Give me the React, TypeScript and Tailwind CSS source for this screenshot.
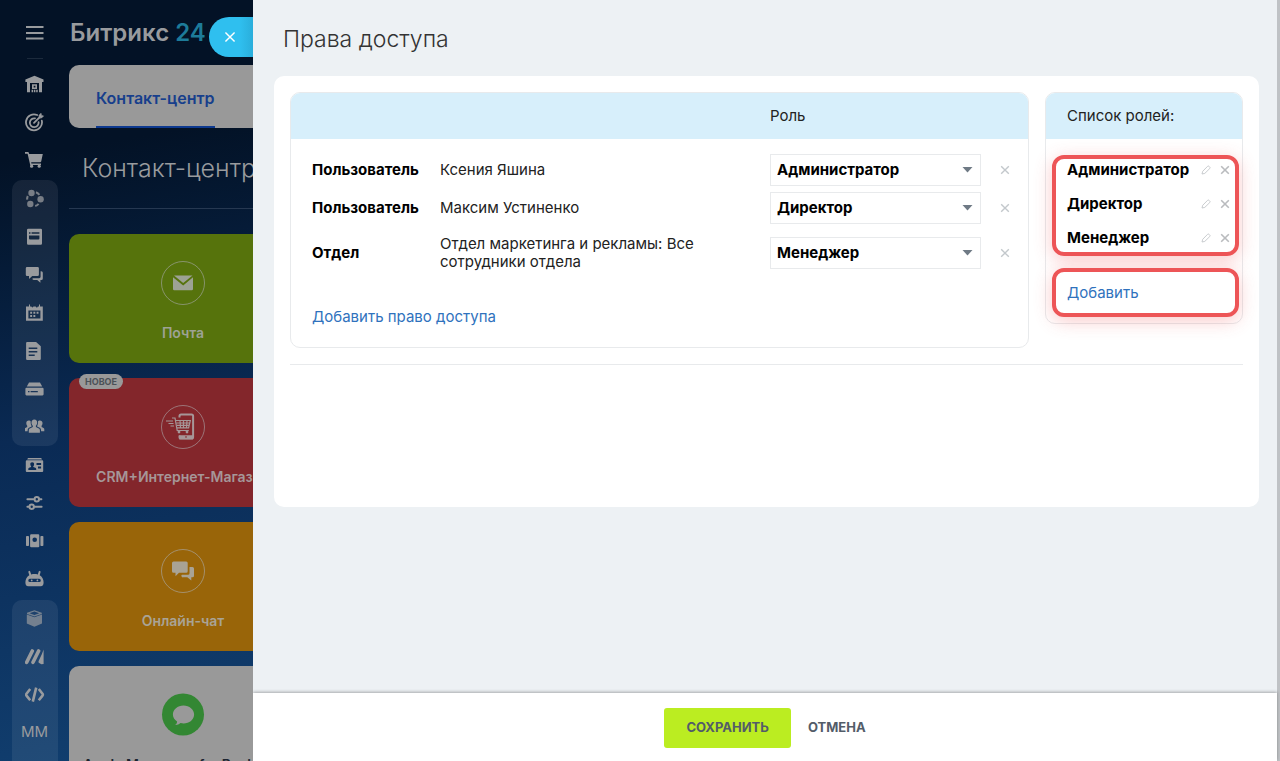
import React, { useState } from 'react';
import type { ReactNode } from 'react';

interface NavItem {
  label: string;
  icon: ReactNode;
}

interface AccessRow {
  id: number;
  kind: string;
  name: string;
  role: string;
}

const ROLES = ['Администратор', 'Директор', 'Менеджер'];

const ACCESS_ROWS: AccessRow[] = [
  { id: 1, kind: 'Пользователь', name: 'Ксения Яшина', role: 'Администратор' },
  { id: 2, kind: 'Пользователь', name: 'Максим Устиненко', role: 'Директор' },
  { id: 3, kind: 'Отдел', name: 'Отдел маркетинга и рекламы: Все сотрудники отдела', role: 'Менеджер' },
];

function NavIcon({ children }: { children: ReactNode }) {
  return (
    <svg width="20" height="20" viewBox="0 0 20 20" fill="currentColor" aria-hidden="true">
      {children}
    </svg>
  );
}

const TOP_NAV: NavItem[] = [
  {
    label: 'Компания',
    icon: (
      <path
        fillRule="evenodd"
        d="M9.500 1.800 18.500 5.400V8H17v10.300H2V8H.4V5.400ZM5 9v9.300h1.600v-2.600h1.500v2.600h.8v-2.600h1.500v2.600h.8v-2.600h1.500v2.600H14V9Zm2 1.300h5V15H7Zm1.700 1.500v1.800h1.700v-1.800Z"
      />
    ),
  },
  {
    label: 'Цели',
    icon: (
      <g fill="none" stroke="currentColor" strokeWidth="1.8" strokeLinecap="round">
        <path d="M12.200 3A8 8 0 1 0 16.800 8.600" />
        <path d="M10 6.400a4.400 4.400 0 1 0 3.600 3.800" />
        <path d="m9 10.800 6-6" />
        <path d="M14 5.600V3.200l2-2 .5 2.200 2.100.5-2 2Z" fill="currentColor" strokeWidth="0.6" />
      </g>
    ),
  },
  {
    label: 'Магазин',
    icon: (
      <>
        <path d="M0 2h3.400l.8 2h13.600l-1.600 7.600-.8.6H6.200l.2 1.200H16V15H5.200L2.600 3.800H0Z" />
        <circle cx="6.600" cy="16.200" r="1.600" />
        <circle cx="14.200" cy="16.200" r="1.600" />
      </>
    ),
  },
];

const GROUP_NAV: NavItem[] = [
  {
    label: 'Совместная работа',
    icon: (
      <g opacity="0.75">
        <circle cx="6.500" cy="4" r="3.200" />
        <circle cx="15.600" cy="10.300" r="3.200" />
        <circle cx="5.300" cy="15" r="3.200" />
        <path
          d="M11 3.200a7.500 7.500 0 0 1 3.400 2.600M13.600 14.800a7 7 0 0 1-3.400 2.200M2.800 7a7 7 0 0 0-.6 3.600"
          fill="none"
          stroke="currentColor"
          strokeWidth="2"
        />
      </g>
    ),
  },
  {
    label: 'Лента',
    icon: (
      <path
        fillRule="evenodd"
        d="M3.200 1.800h12.600a1.200 1.200 0 0 1 1.200 1.200v13.600a1.200 1.200 0 0 1-1.200 1.200H3.200A1.200 1.200 0 0 1 2 16.600V3a1.200 1.200 0 0 1 1.200-1.200ZM4 5.200v1.500h1.500V5.200Zm2.600 0v1.500h7.800V5.200ZM4 8.400v3a1 1 0 0 0 1 1h8.400a1 1 0 0 0 1-1v-3Z"
      />
    ),
  },
  {
    label: 'Чаты',
    icon: (
      <>
        <path d="M2 2h10.600a1.300 1.300 0 0 1 1.300 1.300v6.500a1.300 1.300 0 0 1-1.300 1.300H7.200L4 14v-2.900H2A1.300 1.300 0 0 1 .8 9.800V3.300A1.300 1.300 0 0 1 2 2Z" />
        <path d="M15.600 6.200h.7A1.500 1.500 0 0 1 17.800 7.700v5.800a1.500 1.500 0 0 1-1.500 1.500h-.9v2.800L12.200 15H8.800a1.300 1.300 0 0 1-1.200-1.800h6.600a1.400 1.400 0 0 0 1.400-1.400Z" />
      </>
    ),
  },
  {
    label: 'Календарь',
    icon: (
      <path
        fillRule="evenodd"
        d="M1 3.600h3V1.500h1v2.100h1.400a1 1 0 0 0 1 .8 1 1 0 0 0 1-.8h2.400a1 1 0 0 0 2 0H14V1.500h1v2.100h2.800v14.200H1ZM3.400 7.600v7.800h12V7.600Zm1.800 1.200h1.900v1.900H5.200Zm3.200 0h1.900v1.900H8.400Zm3.200 0h1.900v1.900h-1.900Zm-6.400 3.200h1.900v1.900H5.200Zm3.200 0h1.900v1.900H8.400Z"
      />
    ),
  },
  {
    label: 'Документы',
    icon: (
      <path
        fillRule="evenodd"
        d="M2.200 1h8.900l4.700 4.300v12.600a1.100 1.100 0 0 1-1.100 1.100H2.200a1.100 1.100 0 0 1-1.100-1.100V2.100A1.100 1.100 0 0 1 2.200 1Zm1.500 5.400v1.700h8.600V6.400Zm0 3.500v1.700h8.600V9.900Zm0 3.500v1.700h6v-1.700Z"
      />
    ),
  },
  {
    label: 'Диск',
    icon: (
      <>
        <path d="M4 3.500h11l2.200 4.100H1.800Z" />
        <path
          fillRule="evenodd"
          d="M1.500 8.800h16a1.100 1.100 0 0 1 1.100 1.100v5.400a1.100 1.100 0 0 1-1.100 1.100h-16A1.100 1.100 0 0 1 .4 15.300V9.900a1.100 1.100 0 0 1 1.100-1.100ZM3 11.900v1.400h1.500v-1.400Zm2.600 0v1.400h7.200v-1.400Z"
        />
      </>
    ),
  },
  {
    label: 'Группы',
    icon: (
      <>
        <path d="M9.300 2.400c2 0 3 1.500 2.900 3.300-.1 1.400-.7 2.500-1.300 3v1.400l3 1.400c.7.300 1 1 1 1.800v2.500H3.800v-2.500c0-.8.300-1.500 1-1.800l3-1.400V8.700c-.6-.5-1.300-1.600-1.300-3 0-1.800.9-3.300 2.800-3.300Z" />
        <path d="M3.800 3.600c.9 0 1.600.4 1.900 1-.2 1.700.2 3.200.9 4.300v.7l-2.600 1.200c-1 .6-1.300 1.300-1.400 3.500H-.5v-2c0-.6.300-1 .8-1.300l1.900-1.100V8.700C1.500 8 1.300 7 1.300 6c0-1.400.9-2.400 2.500-2.400Z" />
        <path d="M14.900 3.600c-.9 0-1.600.4-1.900 1 .2 1.700-.2 3.200-.9 4.300v.7l2.600 1.200c1 .6 1.300 1.300 1.400 3.500h3.200v-2c0-.6-.3-1-.8-1.300l-1.900-1.100V8.700c.7-.7.9-1.700.9-2.700 0-1.400-1-2.400-2.600-2.400Z" />
      </>
    ),
  },
];

const MIDDLE_NAV: NavItem[] = [
  {
    label: 'CRM',
    icon: (
      <>
        <path d="M3 3h13.200l.8 1.600H2.200Z" />
        <path
          fillRule="evenodd"
          d="M1.800 5.300h15.400a1 1 0 0 1 1 1v9.600a1 1 0 0 1-1 1H1.800a1 1 0 0 1-1-1V6.300a1 1 0 0 1 1-1Zm5.400 1.900c-1.300 0-2 .9-1.900 2.100 0 .9.400 1.500.8 1.900v.7l-2 .9c-.6.300-.8.700-.8 1.300v1h7.900v-1c0-.6-.3-1-.8-1.300l-2.100-.9v-.7c.5-.4.8-1 .8-1.900.1-1.200-.6-2.100-1.900-2.100Zm4.300.9v2h4.600v-2Zm1.500 3.400v2h3.100v-2Z"
        />
      </>
    ),
  },
  {
    label: 'Настройки',
    icon: (
      <g fill="none" stroke="currentColor" strokeWidth="2" strokeLinecap="round">
        <path d="M2.400 6.200h6M14.600 6.200h1.800M2.400 13.800h1.200M9.800 13.800h6.800" />
        <circle cx="11.800" cy="6.200" r="2.200" />
        <circle cx="6.700" cy="13.800" r="2.200" />
      </g>
    ),
  },
  {
    label: 'Автоматизация',
    icon: (
      <>
        <path
          fillRule="evenodd"
          d="M6.200 3.300h7a1.100 1.100 0 0 1 1.100 1.100v10.800a1.100 1.100 0 0 1-1.100 1.100h-7a1.100 1.100 0 0 1-1.100-1.100V4.400a1.100 1.100 0 0 1 1.100-1.100Zm3.500 3.100a2.300 2.300 0 1 0 0 4.600 2.300 2.300 0 0 0 0-4.600Z"
        />
        <rect x="1" y="5" width="3" height="10" rx="0.8" />
        <rect x="15.400" y="5" width="3" height="10" rx="0.8" />
      </>
    ),
  },
  {
    label: 'Роботы',
    icon: (
      <path
        fillRule="evenodd"
        d="M3.200 2.400 4.900 1.800l1.300 3.600c2.100-.6 4.500-.6 6.600 0L14 1.800l1.700.6-1 3.800c2.500 1.500 3.900 4.100 3.900 7.100 0 2.500-.9 4-2.900 4H3.300c-2 0-2.900-1.500-2.900-4 0-3 1.400-5.600 3.900-7.100Zm1.700 7.400a1.600 1.600 0 0 0 0 3.200h9.300a1.600 1.600 0 0 0 0-3.200Zm1.800.7a.9.900 0 1 1 0 1.800.9.900 0 0 1 0-1.800Zm5.700 0a.9.900 0 1 1 0 1.800.9.900 0 0 1 0-1.800Z"
      />
    ),
  },
];

const BOTTOM_NAV: NavItem[] = [
  {
    label: 'Маркет',
    icon: (
      <g opacity="0.7">
        <path d="M9.400 1.200 16.800 3.800V5L9.400 7.600 2 5V3.800ZM9.400 2.500 4.600 4.200l4.800 1.700 4.800-1.700Z" fillRule="evenodd" />
        <path d="M1.800 5.400 9.400 8.300 17 5.400v9.100l-7.600 3.300-7.600-3.300Z" />
      </g>
    ),
  },
  {
    label: 'Подписка',
    icon: (
      <g fill="none" stroke="currentColor" strokeWidth="3.600" strokeLinecap="round">
        <path d="M1.700 15.300 7.300 4M8 15.300 13.600 4" />
        <path d="m18.600 2.600V17l-2.200.3-2.700-1.500-.2-1.600 3.200-6.600Z" fill="currentColor" stroke="none" />
      </g>
    ),
  },
  {
    label: 'Разработчикам',
    icon: (
      <g fill="none" stroke="currentColor" strokeWidth="2.600">
        <path d="M5.200 4 1.500 8.700a1.600 1.600 0 0 0 0 1.900l3.700 4.700M13.800 4l3.700 4.700a1.600 1.600 0 0 1 0 1.900l-3.700 4.700M11.200 2.600 7.800 16.600" />
      </g>
    ),
  },
];

function NavButton({ item }: { item: NavItem }) {
  return (
    <button
      type="button"
      aria-label={item.label}
      className="flex h-[38px] w-[46px] items-center justify-center"
    >
      <NavIcon>{item.icon}</NavIcon>
    </button>
  );
}

function Sidebar() {
  return (
    <nav className="flex w-[69px] shrink-0 flex-col items-center overflow-hidden pt-3.5 text-[#999b9e]">
      <button type="button" aria-label="Меню" className="flex h-[38px] w-[46px] shrink-0 items-center justify-center">
        <svg width="20" height="20" viewBox="0 0 20 20" fill="none" stroke="currentColor" strokeWidth="1.8">
          <path d="M1 4h17.500M1 10h17.500M1 15.500h17.500" />
        </svg>
      </button>
      <div className="mt-1.5 mb-1.5 h-px w-4 shrink-0 bg-white/10" />
      <div className="flex flex-col">
        {TOP_NAV.map((item) => (
          <NavButton key={item.label} item={item} />
        ))}
      </div>
      <div className="mt-px flex flex-col rounded-[10px] bg-white/7">
        {GROUP_NAV.map((item) => (
          <NavButton key={item.label} item={item} />
        ))}
      </div>
      <div className="flex flex-col">
        {MIDDLE_NAV.map((item) => (
          <NavButton key={item.label} item={item} />
        ))}
      </div>
      <div className="mt-0.5 flex flex-1 flex-col rounded-t-[10px] bg-white/7">
        {BOTTOM_NAV.map((item) => (
          <NavButton key={item.label} item={item} />
        ))}
        <button type="button" className="h-9 w-[46px] text-[15px]">
          ММ
        </button>
      </div>
    </nav>
  );
}

function ChannelCard({ title, className, icon, badge }: { title: string; className: string; icon: ReactNode; badge?: string }) {
  return (
    <a href="#" className={`relative flex h-[129px] shrink-0 flex-col items-center rounded-[10px] pt-[27px] ${className}`}>
      {badge && (
        <span className="absolute -top-1 left-2.5 rounded-full bg-[#999] px-1.5 text-[9px] leading-[15px] font-bold text-[#4b5157]">
          {badge}
        </span>
      )}
      {icon}
      <span className="mt-[18px] text-sm font-semibold whitespace-nowrap">{title}</span>
    </a>
  );
}

function CircleIcon({ children }: { children: ReactNode }) {
  return (
    <svg className="shrink-0" width="44" height="44" viewBox="0 0 44 44" fill="currentColor" aria-hidden="true">
      <circle cx="22" cy="22" r="21.500" fill="none" stroke="currentColor" opacity="0.7" />
      {children}
    </svg>
  );
}

function ContactCenter() {
  return (
    <main className="flex w-[228px] shrink-0 flex-col">
      <div className="mt-[17px] h-8 pl-px text-2xl leading-8 font-semibold whitespace-nowrap text-[#999b9e]">
        Битрикс <span className="text-[#1d7b99]">24</span>
      </div>
      <div className="mt-4 flex h-[63px] shrink-0 rounded-[10px] bg-[#999] pl-[27px]">
        <a
          href="#"
          className="flex items-center border-b-2 border-[#0d398f] pt-1 text-base font-semibold text-[#173f8c]"
        >
          Контакт-центр
        </a>
      </div>
      <h2 className="mt-5 pl-[13px] text-[25px] leading-10 font-light whitespace-nowrap text-[#999b9e]">Контакт-центр</h2>
      <hr className="mt-5 border-[#263851]" />
      <div className="mt-[25px] flex flex-col gap-[15px]">
        <ChannelCard
          title="Почта"
          className="bg-[#56730c] text-[#9da294]"
          icon={
            <CircleIcon>
              <path d="M13 14.500h18.500L22.200 22Z" />
              <path d="M12 16.200 22.200 24.500 32 16.200V28a1.200 1.200 0 0 1-1.200 1.200H13.200A1.200 1.200 0 0 1 12 28Z" />
            </CircleIcon>
          }
        />
        <ChannelCard
          title="CRM+Интернет-Магазин"
          className="bg-[#83262b] text-[#a69698]"
          badge="НОВОЕ"
          icon={
            <CircleIcon>
              <path
                d="M18.500 12.500v-1.400c0-1 .7-1.600 1.600-1.600h10.400c1 0 1.600.6 1.600 1.600v20.800c0 1-.6 1.600-1.600 1.600H20.100c-1 0-1.600-.6-1.600-1.600v-1.400"
                fill="none"
                stroke="currentColor"
                strokeWidth="2"
              />
              <path fillRule="evenodd" d="M18 30.300h14v4H18Zm7 1a1 1 0 1 0 0 2 1 1 0 0 0 0-2Z" />
              <path
                d="M11 13h3l2.200 12.500h11.600M15 15.500h14.300l-1.700 7.300H16.200M15.600 18h13M16 20.400h12M19 15.500l.5 7.300M22.500 15.500v7.300M26 15.500l-.5 7.300M5 16h7M7.500 18.500h5M9.500 21h3.500"
                fill="none"
                stroke="currentColor"
                strokeWidth="1.200"
              />
              <circle cx="18" cy="27" r="1.400" />
              <circle cx="26" cy="27" r="1.400" />
            </CircleIcon>
          }
        />
        <ChannelCard
          title="Онлайн-чат"
          className="bg-[#996509] text-[#a9a395]"
          icon={
            <CircleIcon>
              <path d="M12.500 12.500h12.700a1.500 1.500 0 0 1 1.500 1.500v8.300a1.500 1.500 0 0 1-1.500 1.500H18l-3.500 3.400v-3.400h-2a1.500 1.500 0 0 1-1.500-1.500V14a1.500 1.500 0 0 1 1.500-1.500Z" />
              <path d="M28.500 18h3a1.500 1.500 0 0 1 1.500 1.500v7.300a1.500 1.500 0 0 1-1.500 1.500h-1.200v3.200l-4-3.200h-4a1.500 1.500 0 0 1-1.400-2.600h6.100a1.500 1.500 0 0 0 1.500-1.500Z" />
            </CircleIcon>
          }
        />
        <ChannelCard
          title="Apple Messages for Business"
          className="bg-[#999] text-[#1c2430]"
          icon={
            <svg className="shrink-0" width="44" height="44" viewBox="0 0 44 44" aria-hidden="true">
              <circle cx="22" cy="21.500" r="21" fill="#338733" />
              <path
                d="M22.500 12.500c5.900 0 10.600 4 10.600 9s-4.700 9-10.600 9c-1 0-2-.1-2.900-.4-1.600 1.400-3.500 2-5.400 1.900 1.200-1 1.900-2 1.900-3.600-2.600-1.600-4.200-4.100-4.200-6.900 0-5 4.700-9 10.600-9Z"
                fill="#999"
              />
            </svg>
          }
        />
      </div>
    </main>
  );
}

function CrossIcon({ className = '' }: { className?: string }) {
  return (
    <svg className={className} width="10" height="10" viewBox="0 0 10 10" fill="none" stroke="currentColor" aria-hidden="true">
      <path d="m1.200 1.200 7.600 7.600M8.800 1.200 1.200 8.800" />
    </svg>
  );
}

function PencilIcon() {
  return (
    <svg width="10" height="10" viewBox="0 0 10 10" fill="none" stroke="currentColor" strokeWidth="0.9" aria-hidden="true">
      <path d="M1 9 1.700 6.300 6.600 1.300a1 1 0 0 1 1.400 0l.8.800a1 1 0 0 1 0 1.400L3.800 8.400Z" />
    </svg>
  );
}

function AccessTable() {
  const [rows, setRows] = useState(ACCESS_ROWS);

  function handleRole(id: number, role: string) {
    setRows(rows.map((row) => (row.id === id ? { ...row, role } : row)));
  }

  return (
    <section className="flex-1 overflow-hidden rounded-[10px] border border-[#e8eaec]">
      <table className="w-full table-fixed text-left text-[15px] leading-[18px]">
        <colgroup>
          <col className="w-[149px]" />
          <col />
          <col className="w-[211px]" />
          <col className="w-[47px]" />
        </colgroup>
        <thead className="bg-[#d7effb]">
          <tr className="h-[46px]">
            <th />
            <th />
            <th className="font-normal text-[#222]">Роль</th>
            <th />
          </tr>
        </thead>
        <tbody className="before:block before:h-3">
          {rows.map((row) => (
            <tr key={row.id} className="h-[38px] last:h-[52px]">
              <th className="pl-[21px] font-bold">{row.kind}</th>
              <td className="pr-14 text-[#222]">{row.name}</td>
              <td>
                <div className="relative">
                  <select
                    aria-label={`Роль: ${row.name}`}
                    value={row.role}
                    onChange={(e) => handleRole(row.id, e.target.value)}
                    className="block h-8 w-full appearance-none border border-[#e8eaec] bg-white px-1.5 font-bold"
                  >
                    {ROLES.map((role) => (
                      <option key={role}>{role}</option>
                    ))}
                  </select>
                  <svg
                    className="pointer-events-none absolute top-[13px] right-2"
                    width="11"
                    height="6"
                    viewBox="0 0 11 6"
                    fill="#6f7a85"
                  >
                    <path d="M.5 0h10L5.500 5.500Z" />
                  </svg>
                </div>
              </td>
              <td>
                <button
                  type="button"
                  aria-label="Удалить"
                  onClick={() => setRows(rows.filter((r) => r.id !== row.id))}
                  className="flex w-full justify-center text-[#c3c8cc]"
                >
                  <CrossIcon className="stroke-[1.4]" />
                </button>
              </td>
            </tr>
          ))}
        </tbody>
      </table>
      <a href="#" className="mt-7 mb-5 ml-[21px] inline-block text-[15px] leading-5 text-[#2f72bd]">
        Добавить право доступа
      </a>
    </section>
  );
}

function RoleList() {
  return (
    <section className="w-[198px] shrink-0 self-start rounded-[10px] border border-[#e8eaec] text-[15px] leading-5">
      <h3 className="rounded-t-[9px] bg-[#d7effb] py-[13px] pl-[21px] text-[#222]">Список ролей:</h3>
      <div className="flex flex-col gap-3 pt-4 pr-[3px] pb-1.5 pl-1.5">
        <ul className="flex flex-col gap-3.5 rounded-xl border-4 border-[#ed5557] bg-white pt-px pr-[5px] pb-1 pl-[11px] shadow-[0_4px_18px_rgba(238,80,80,0.3)]">
          {ROLES.map((role) => (
            <li key={role} className="flex items-center font-bold">
              <span className="flex-1">{role}</span>
              <button type="button" aria-label={`Изменить: ${role}`} className="mr-[9px] text-[#c3c6c9]">
                <PencilIcon />
              </button>
              <button type="button" aria-label={`Удалить: ${role}`} className="text-[#b9bbbe]">
                <CrossIcon className="stroke-[1.6]" />
              </button>
            </li>
          ))}
        </ul>
        <div className="rounded-xl border-4 border-[#ed5557] bg-white pt-[11px] pb-2.5 pl-[11px] shadow-[0_4px_18px_rgba(238,80,80,0.3)]">
          <a href="#" className="text-[#2f72bd]">
            Добавить
          </a>
        </div>
      </div>
    </section>
  );
}

export default function App() {
  return (
    <div className="flex h-screen overflow-hidden bg-[#edf1f4] font-[Inter,sans-serif] text-black">
      <div className="relative flex w-[253px] shrink-0 overflow-hidden bg-linear-170 from-[#031226] from-20% via-[#0a2a54] via-55% to-[#113f70]">
        <Sidebar />
        <ContactCenter />
        <button
          type="button"
          aria-label="Закрыть"
          className="absolute top-[17px] right-0 flex h-10 w-11 items-center rounded-l-full bg-linear-to-r from-[#2fbfef] from-70% to-[#2aaedb] pl-[15px] text-white"
        >
          <CrossIcon className="size-3 stroke-[1.2]" />
        </button>
      </div>
      <div className="flex min-w-0 flex-1 flex-col border-r-3 border-[#bfc2c5]">
        <h1 className="mt-5 ml-[30px] text-[23px] leading-[38px] font-light text-[#333]">Права доступа</h1>
        <div className="mt-[18px] mr-[18px] ml-[21px] min-h-[431px] rounded-[10px] bg-white p-4">
          <div className="flex items-start gap-4 border-b border-[#e8eaec] pb-4">
            <AccessTable />
            <RoleList />
          </div>
        </div>
        <footer className="mt-auto flex h-[68px] shrink-0 items-center justify-center gap-[17px] bg-white pt-0.5 text-[13px] font-bold text-[#535c69] shadow-[0_-1px_3px_rgba(0,0,0,0.3)]">
          <button type="button" className="h-10 rounded-[3px] bg-[#bbed21] px-[22px]">
            СОХРАНИТЬ
          </button>
          <button type="button">ОТМЕНА</button>
        </footer>
      </div>
    </div>
  );
}
